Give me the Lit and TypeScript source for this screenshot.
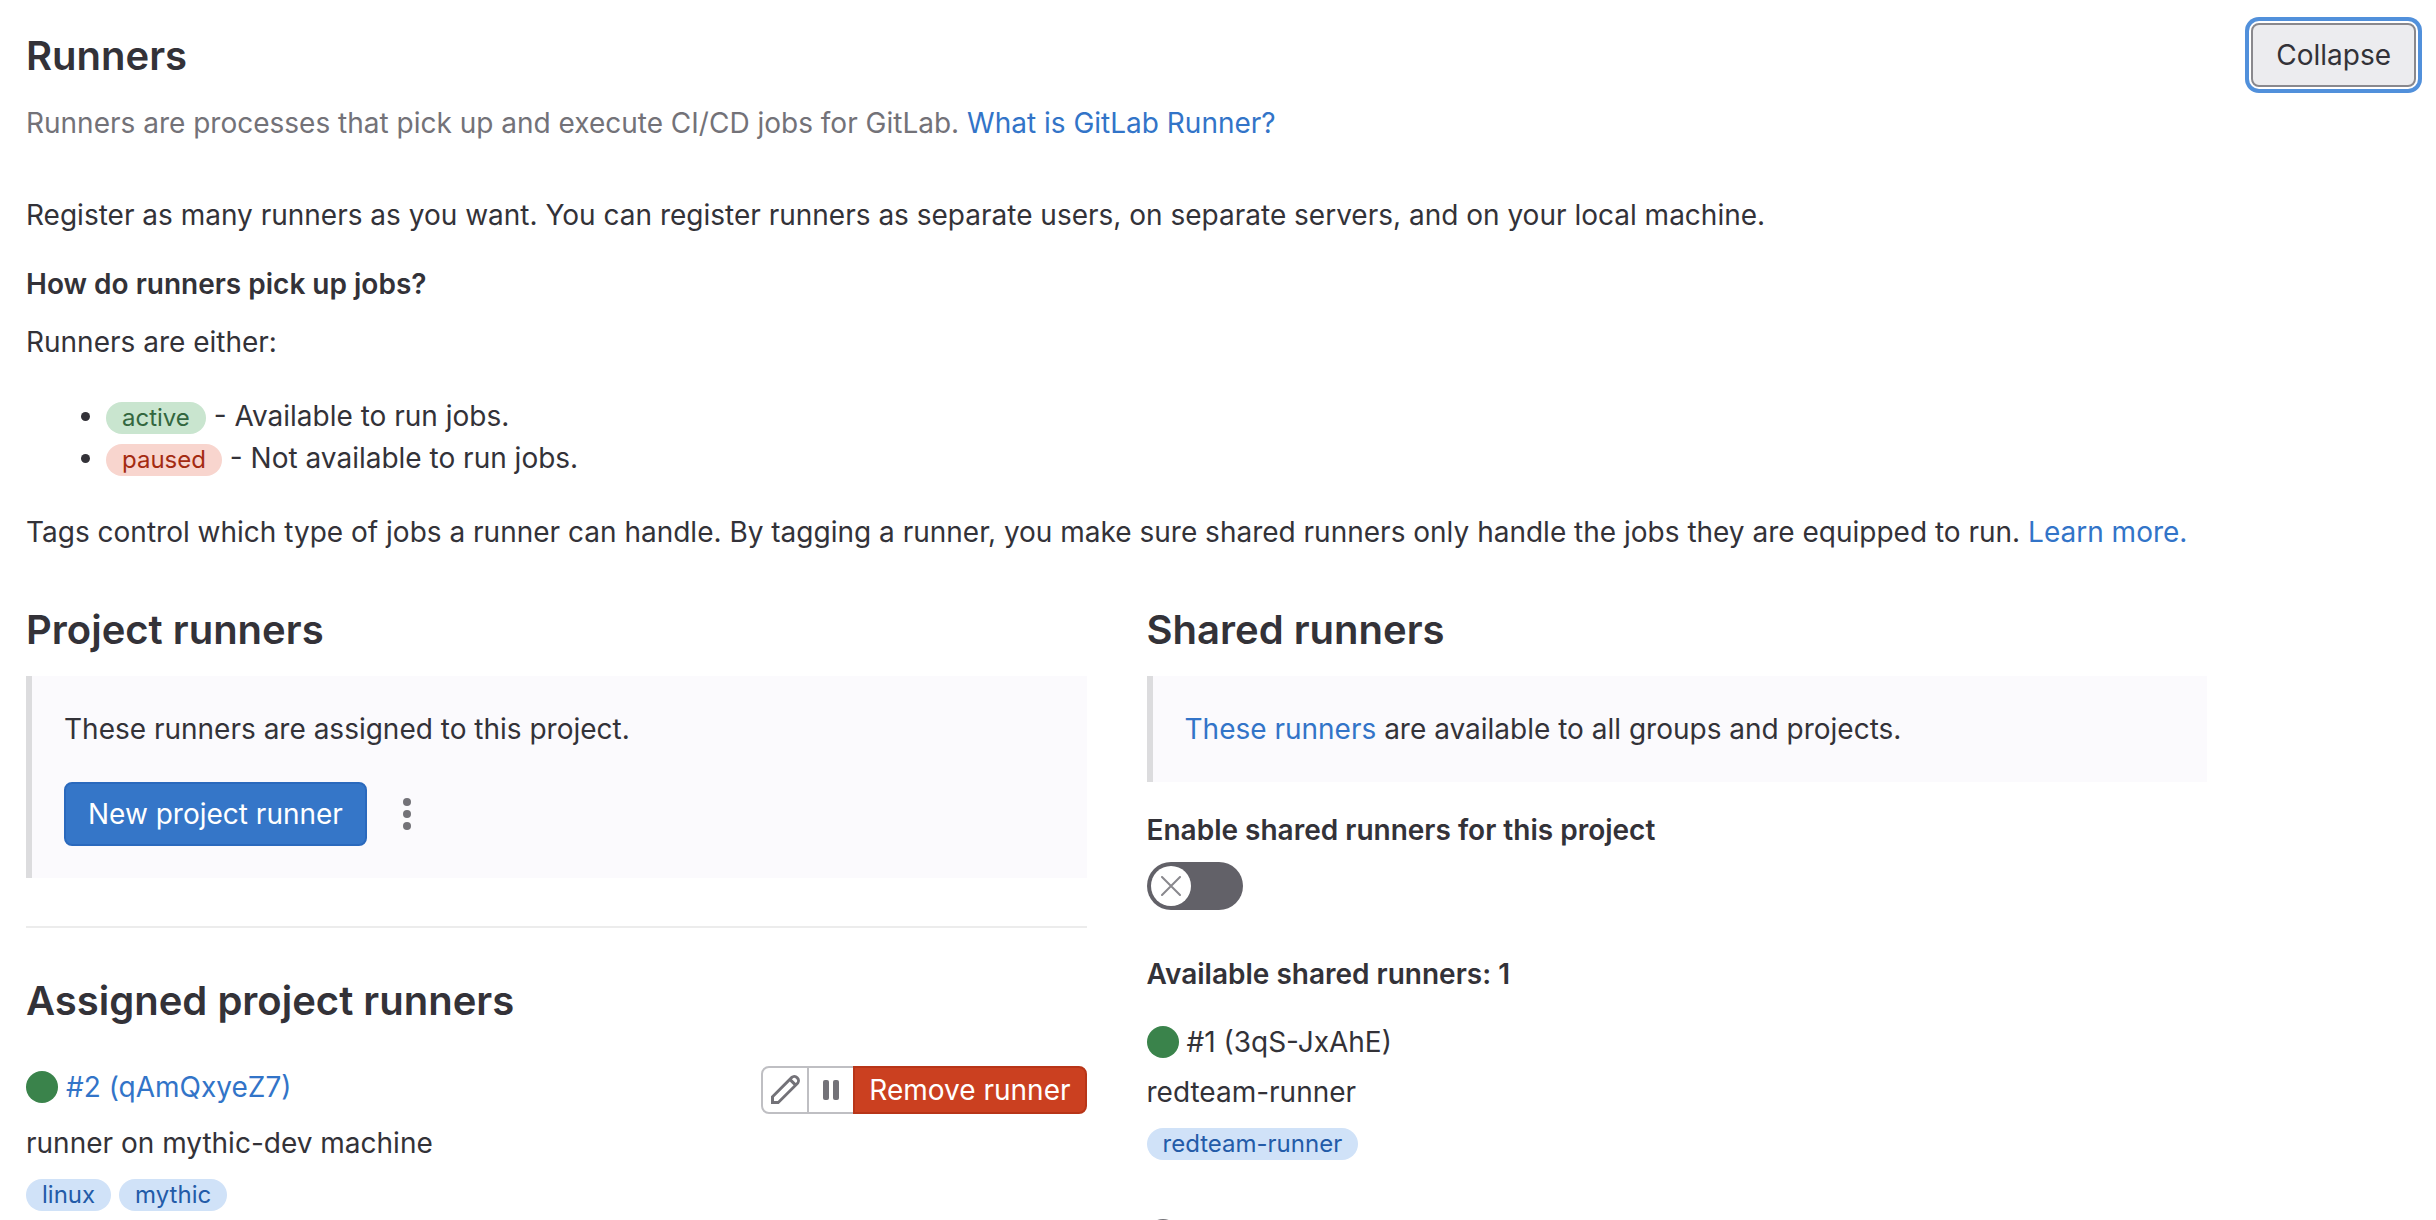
import { LitElement, html, css, svg } from "lit";
import { customElement, property, state } from "lit/decorators.js";

type Variant = "success" | "danger" | "info";

@customElement("gl-badge")
class GlBadge extends LitElement {
  @property() variant: Variant = "info";

  static styles = css`
    :host {
      display: inline-block;
      vertical-align: middle;
    }
    .badge {
      display: block;
      padding: 0 16px;
      border-radius: 16px;
      font-size: 24px;
      line-height: 32px;
      white-space: nowrap;
    }
    .success {
      background: #c9e5cf;
      color: #33673f;
    }
    .danger {
      background: #f8d5ce;
      color: #a42b12;
    }
    .info {
      background: #d0e2f8;
      color: #235ba8;
    }
  `;

  render() {
    return html`<span class="badge ${this.variant}"><slot></slot></span>`;
  }
}

const pencilIcon = svg`
  <path fill-rule="evenodd" clip-rule="evenodd"
    d="M11.42.88a2.75 2.75 0 0 1 3.7 3.7l-.34.5-9.9 9.9H1v-3.9l9.92-9.9.5-.3zM10.4 3.7 2.5 11.6v1.9h1.9l7.9-7.9L10.4 3.7zm1.06-1.06 1.9 1.9.3-.3a1.25 1.25 0 0 0 0-1.76l-.14-.14a1.25 1.25 0 0 0-1.76 0l-.3.3z"/>`;

@customElement("app-root")
class AppRoot extends LitElement {
  @state() private expanded = true;
  @state() private sharedEnabled = false;

  static styles = css`
    :host {
      display: block;
      height: 100vh;
      overflow: hidden;
      background: #fff;
      color: #333238;
      font-family: Inter, "Noto Sans", "Liberation Sans", sans-serif;
      font-size: 28px;
      line-height: 42px;
    }
    * {
      box-sizing: border-box;
    }
    h3,
    h4,
    h5,
    p,
    ul {
      margin: 0;
    }
    a {
      color: #3274c8;
      text-decoration: none;
    }
    button {
      font: inherit;
      cursor: pointer;
    }
    .settings {
      padding: 23px 20px 0 26px;
    }
    .header {
      display: flex;
      justify-content: space-between;
      align-items: flex-start;
    }
    .intro {
      padding-top: 7px;
    }
    .title {
      font-size: 40px;
      line-height: 52px;
      font-weight: 600;
      margin-bottom: 20px;
    }
    .assigned {
      margin-bottom: 39px;
    }
    .muted {
      color: #737278;
    }
    .collapse {
      height: 64px;
      padding: 0 23px;
      border: 2px solid #89888d;
      border-radius: 8px;
      background: #ececef;
      color: #333238;
      box-shadow: 0 0 0 2px #fff, 0 0 0 6px #5190db;
      outline: none;
    }
    .content {
      padding: 50px 209px 0 0;
    }
    .subtitle {
      font-size: 28px;
      line-height: 42px;
      font-weight: 600;
    }
    .question {
      margin: 27px 0 16px;
    }
    .states {
      margin: 32px 0;
      padding-left: 80px;
    }
    .columns {
      display: grid;
      grid-template-columns: 1fr 1fr;
      gap: 60px;
      margin-top: 51px;
    }
    .callout {
      padding: 32px;
      border-left: 6px solid #dcdcde;
      background: #fbfafd;
    }
    .actions {
      display: flex;
      align-items: center;
      gap: 8px;
      margin-top: 32px;
    }
    .confirm {
      height: 64px;
      padding: 0 22px;
      border: 2px solid #2a69bd;
      border-radius: 8px;
      background: #3576c8;
      color: #fff;
    }
    .more {
      display: flex;
      align-items: center;
      justify-content: center;
      width: 64px;
      height: 64px;
      padding: 0;
      border: 0;
      background: none;
      color: #737278;
    }
    .icon {
      display: block;
      fill: currentColor;
    }
    .rule {
      height: 2px;
      margin: 48px 0 47px;
      border: 0;
      background: #ececec;
    }
    .runner-top {
      display: flex;
      justify-content: space-between;
      align-items: flex-start;
    }
    .runner-id {
      display: flex;
      align-items: center;
      gap: 8px;
    }
    .dot {
      width: 32px;
      height: 32px;
      border-radius: 50%;
      background: #3a834b;
    }
    .group {
      display: flex;
      height: 48px;
    }
    .tool {
      display: flex;
      align-items: center;
      justify-content: center;
      width: 48px;
      padding: 0;
      border: 2px solid #bfbfc3;
      background: #fff;
      color: #737278;
    }
    .edit {
      border-radius: 8px 0 0 8px;
    }
    .pause {
      width: 44px;
      border-width: 2px 0;
    }
    .remove {
      padding: 0 14px;
      border: 2px solid #b83518;
      border-radius: 0 8px 8px 0;
      background: #cb4020;
      color: #fff;
      line-height: 42px;
    }
    .name {
      margin-top: 8px;
    }
    .tags {
      display: flex;
      gap: 8px;
      margin-top: 15px;
    }
    .toggle-label {
      display: block;
      margin: 27px 0 11px;
      font-weight: 600;
    }
    .toggle {
      display: flex;
      align-items: center;
      width: 96px;
      height: 48px;
      padding: 4px;
      border: 0;
      border-radius: 24px;
      background: #626168;
      color: #89888d;
    }
    .toggle.on {
      justify-content: flex-end;
      background: #3576c8;
    }
    .knob {
      display: flex;
      align-items: center;
      justify-content: center;
      width: 40px;
      height: 40px;
      border-radius: 50%;
      background: #fff;
    }
    .available {
      margin: 43px 0 26px;
    }
    .next {
      margin-top: 59px;
    }
    .offline {
      width: 32px;
      height: 32px;
      border: 4px solid #737278;
      border-radius: 50%;
    }
  `;

  private renderContent() {
    return html`
      <div class="content">
        <p>
          Register as many runners as you want. You can register runners as separate users, on
          separate servers, and on your local machine.
        </p>
        <h5 class="subtitle question">How do runners pick up jobs?</h5>
        <p>Runners are either:</p>
        <ul class="states">
          <li><gl-badge variant="success">active</gl-badge> - Available to run jobs.</li>
          <li><gl-badge variant="danger">paused</gl-badge> - Not available to run jobs.</li>
        </ul>
        <p>
          Tags control which type of jobs a runner can handle. By tagging a runner, you make sure
          shared runners only handle the jobs they are equipped to run.
          <a href="#tags">Learn more.</a>
        </p>
        <div class="columns">${this.renderProject()} ${this.renderShared()}</div>
      </div>
    `;
  }

  private renderProject() {
    return html`
      <section>
        <h4 class="title">Project runners</h4>
        <div class="callout">
          <p>These runners are assigned to this project.</p>
          <div class="actions">
            <button class="confirm" type="button">New project runner</button>
            <button class="more" type="button" aria-label="More actions">
              <svg class="icon" width="32" height="32" viewBox="0 0 32 32">
                <circle cx="16" cy="4" r="4" />
                <circle cx="16" cy="16" r="4" />
                <circle cx="16" cy="28" r="4" />
              </svg>
            </button>
          </div>
        </div>
        <hr class="rule" />
        <h4 class="title assigned">Assigned project runners</h4>
        <div class="runner-top">
          <div class="runner-id">
            <span class="dot"></span>
            <a href="#runner-2">#2 (qAmQxyeZ7)</a>
          </div>
          <div class="group">
            <button class="tool edit" type="button" aria-label="Edit">
              <svg class="icon" width="32" height="32" viewBox="0 0 16 16">${pencilIcon}</svg>
            </button>
            <button class="tool pause" type="button" aria-label="Pause">
              <svg class="icon" width="16" height="20" viewBox="0 0 16 20">
                <rect width="6" height="20" rx="2" />
                <rect x="10" width="6" height="20" rx="2" />
              </svg>
            </button>
            <button class="remove" type="button">Remove runner</button>
          </div>
        </div>
        <p class="name">runner on mythic-dev machine</p>
        <div class="tags">
          <gl-badge>linux</gl-badge>
          <gl-badge>mythic</gl-badge>
        </div>
      </section>
    `;
  }

  private renderShared() {
    return html`
      <section>
        <h4 class="title">Shared runners</h4>
        <div class="callout">
          <p><a href="#shared">These runners</a> are available to all groups and projects.</p>
        </div>
        <label class="toggle-label" for="shared-toggle">Enable shared runners for this project</label>
        <button
          id="shared-toggle"
          class="toggle ${this.sharedEnabled ? "on" : ""}"
          type="button"
          role="switch"
          aria-checked=${this.sharedEnabled ? "true" : "false"}
          @click=${() => (this.sharedEnabled = !this.sharedEnabled)}
        >
          <span class="knob">
            <svg width="20" height="20" viewBox="0 0 20 20" fill="none" stroke="currentColor"
              stroke-width="2" stroke-linecap="round">
              <path d=${this.sharedEnabled ? "M1 11l6 6L19 3" : "M1 1l18 18M19 1L1 19"} />
            </svg>
          </span>
        </button>
        <h5 class="subtitle available">Available shared runners: 1</h5>
        <div class="runner-id">
          <span class="dot"></span>
          <span>#1 (3qS-JxAhE)</span>
        </div>
        <p class="name">redteam-runner</p>
        <div class="tags"><gl-badge>redteam-runner</gl-badge></div>
        <div class="runner-id next"><span class="offline"></span></div>
      </section>
    `;
  }

  render() {
    return html`
      <section class="settings">
        <div class="header">
          <div class="intro">
            <h4 class="title">Runners</h4>
            <p class="muted">
              Runners are processes that pick up and execute CI/CD jobs for GitLab.
              <a href="#runner-docs">What is GitLab Runner?</a>
            </p>
          </div>
          <button
            class="collapse"
            type="button"
            aria-expanded=${this.expanded ? "true" : "false"}
            @click=${() => (this.expanded = !this.expanded)}
          >
            ${this.expanded ? "Collapse" : "Expand"}
          </button>
        </div>
        ${this.expanded ? this.renderContent() : ""}
      </section>
    `;
  }
}
